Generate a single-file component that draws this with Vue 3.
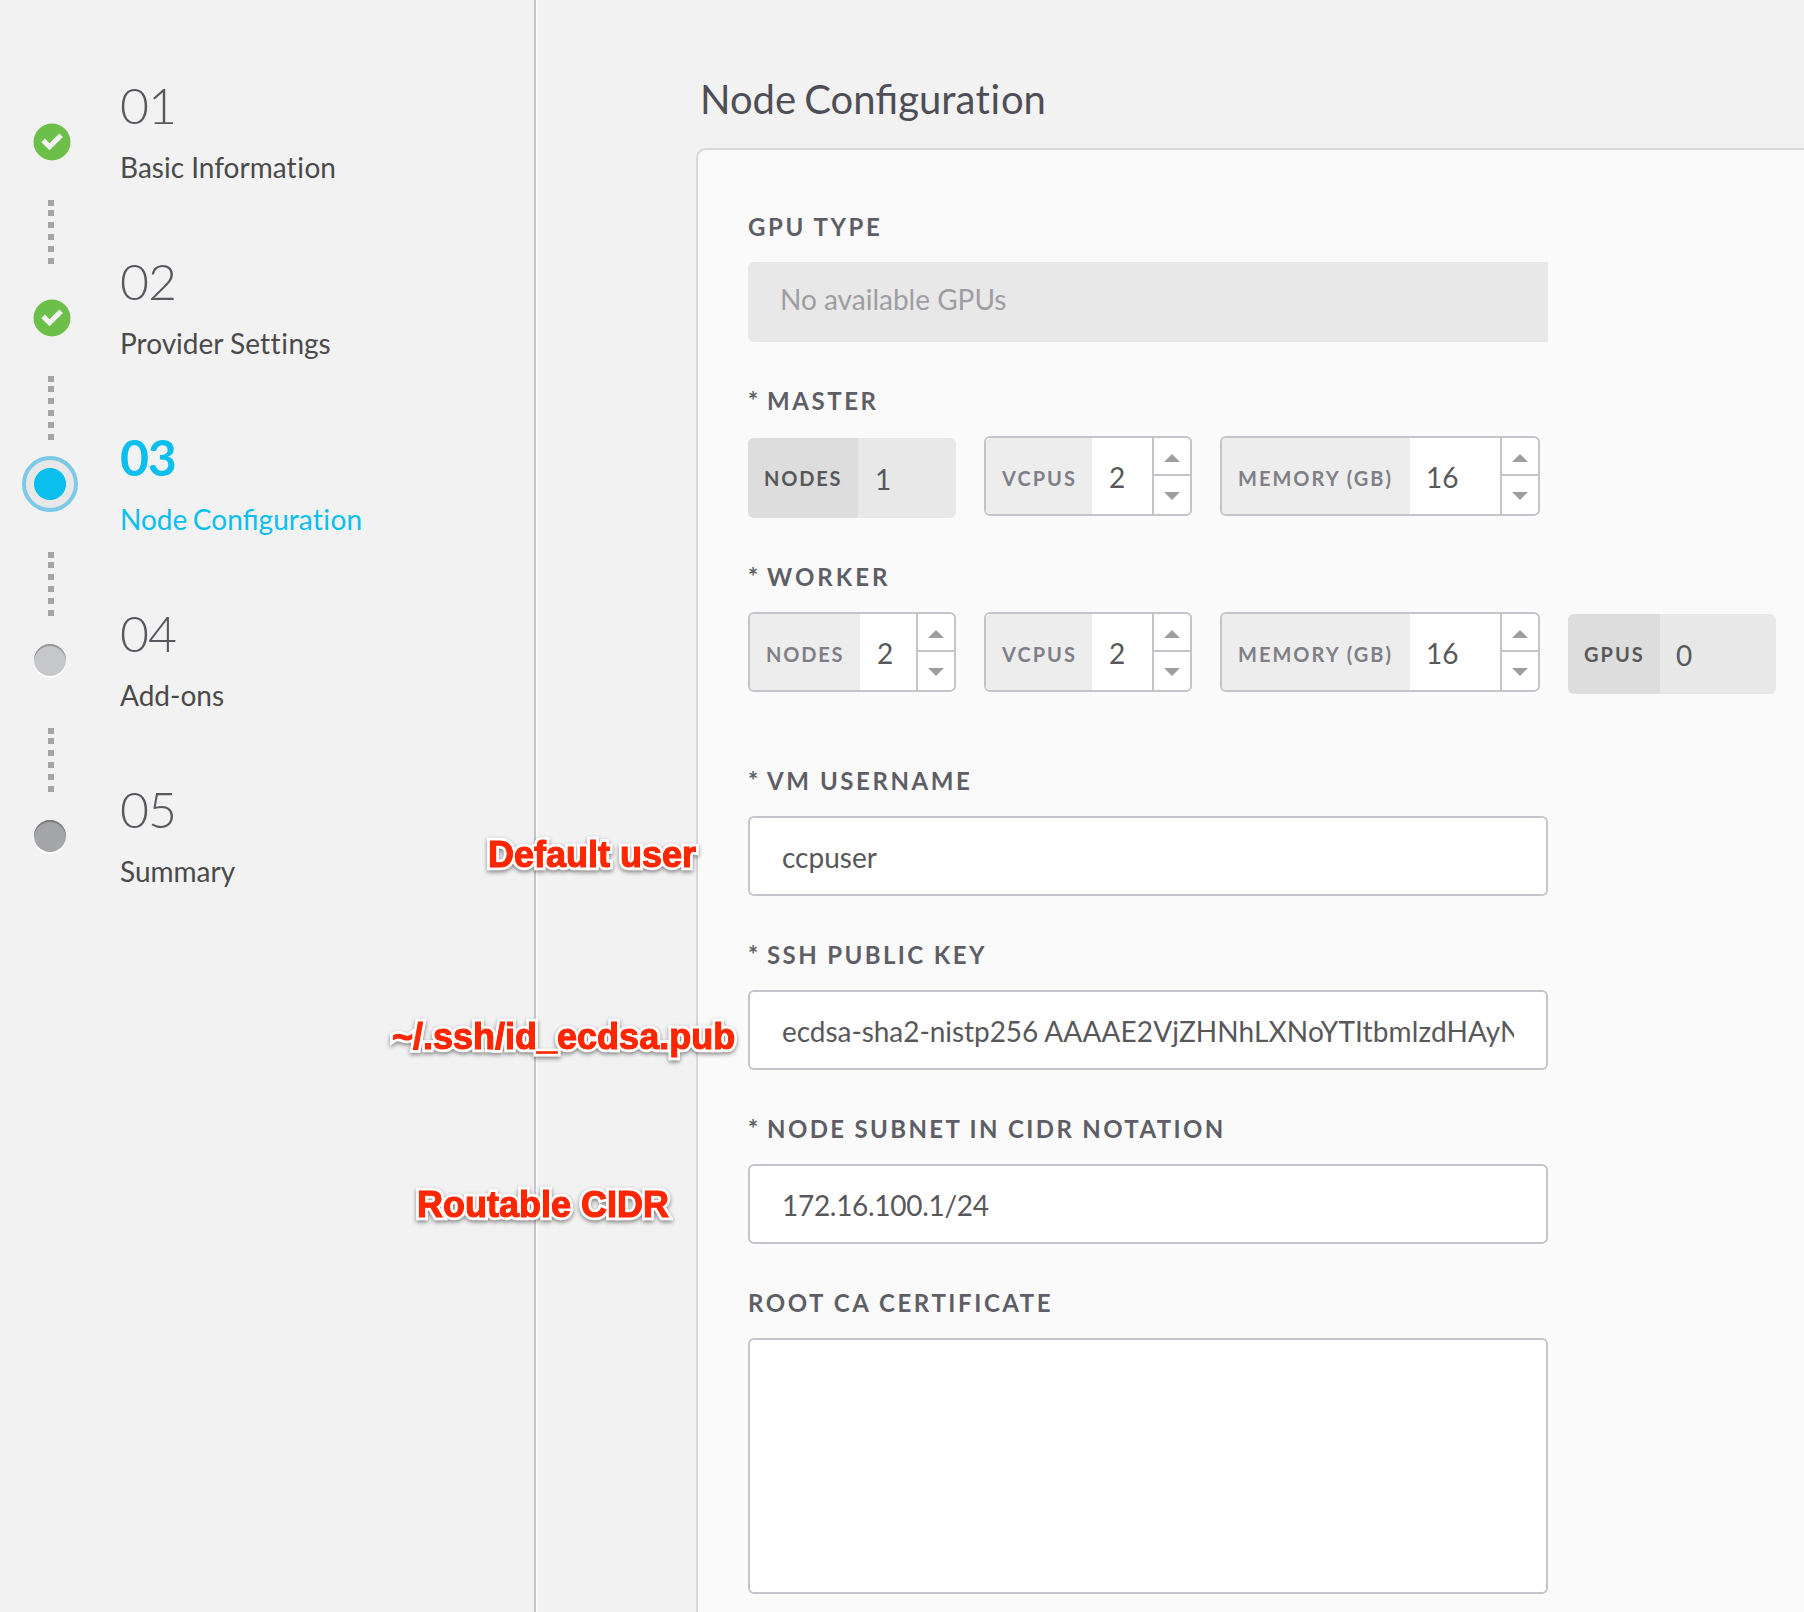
<script setup>
const steps = [
  { number: '01', title: 'Basic Information', state: 'done' },
  { number: '02', title: 'Provider Settings', state: 'done' },
  { number: '03', title: 'Node Configuration', state: 'active' },
  { number: '04', title: 'Add-ons', state: 'next' },
  { number: '05', title: 'Summary', state: 'pending' },
]

const pools = [
  {
    label: 'MASTER',
    key: 'master',
    fields: [
      { name: 'NODES', value: '1', size: 'nodes', disabled: true },
      { name: 'VCPUS', value: '2', size: 'vcpus' },
      { name: 'MEMORY (GB)', value: '16', size: 'memory' },
    ],
  },
  {
    label: 'WORKER',
    key: 'worker',
    fields: [
      { name: 'NODES', value: '2', size: 'nodes' },
      { name: 'VCPUS', value: '2', size: 'vcpus' },
      { name: 'MEMORY (GB)', value: '16', size: 'memory' },
      { name: 'GPUS', value: '0', size: 'gpus', disabled: true },
    ],
  },
]

const inputs = [
  { label: 'VM USERNAME', parts: ['ccpuser'], kind: 'user' },
  { label: 'SSH PUBLIC KEY', parts: ['ecdsa-sha2-nistp256 ', 'AAAAE2VjZHNhLXNoYTItbmlzdHAyN'], kind: 'key' },
  { label: 'NODE SUBNET IN CIDR NOTATION', parts: ['172.16.100.1/24'], kind: 'cidr' },
]

const notes = [
  { text: 'Default user', place: 'note-user' },
  { text: '~/.ssh/id_ecdsa.pub', place: 'note-key' },
  { text: 'Routable CIDR', place: 'note-cidr' },
]

// Lato joins "ti" and "tt"; those pairs are set apart, while "fi" stays joined.
const pieces = (text) => text.split(/(tti|tt|ti)/)
</script>

<template>
  <div class="page">
    <aside class="sidebar">
      <div v-for="(step, i) in steps" :key="step.number" class="step" :class="step.state">
        <div class="rail">
          <div class="marker">
            <svg v-if="step.state === 'done'" class="check" width="38" height="38" viewBox="0 0 38 38">
              <circle cx="19" cy="19" r="18.5" fill="#6cc04a" />
              <path d="M8.3 19.2 L11.9 15.6 L16.5 20.2 L26.3 10.5 L30 14.1 L16.5 27.3 Z" fill="#f2f2f2" />
            </svg>
            <span v-else class="dot"></span>
          </div>
          <div v-if="i < steps.length - 1" class="trail">
            <i v-for="n in 6" :key="n"></i>
          </div>
        </div>
        <div class="caption">
          <div class="number">{{ step.number }}</div>
          <div class="title"><span v-for="(p, k) in pieces(step.title)" :key="k" :class="{ apart: k % 2 }">{{ p }}</span></div>
        </div>
      </div>
    </aside>

    <main class="content">
      <h1><span v-for="(p, k) in pieces('Node Configuration')" :key="k" :class="{ apart: k % 2 }">{{ p }}</span></h1>
      <section class="card">
        <div class="group">
          <div class="label">GPU TYPE</div>
          <div class="select">No available GPUs</div>
        </div>

        <div v-for="pool in pools" :key="pool.key" class="group" :class="pool.key">
          <div class="label"><span class="star">* </span>{{ pool.label }}</div>
          <div class="row">
            <div
              v-for="field in pool.fields"
              :key="field.name"
              class="spinner"
              :class="[field.size, { disabled: field.disabled }]"
            >
              <span class="addon">{{ field.name }}</span>
              <span class="value">{{ field.value }}</span>
              <span v-if="!field.disabled" class="arrows">
                <span class="arrow"><i class="up"></i></span>
                <span class="arrow"><i class="down"></i></span>
              </span>
            </div>
          </div>
        </div>

        <div v-for="input in inputs" :key="input.label" class="group" :class="input.kind">
          <div class="label"><span class="star">* </span>{{ input.label }}</div>
          <div class="input"><div class="text"><span v-for="part in input.parts" :key="part">{{ part }}</span></div></div>
        </div>

        <div class="group">
          <div class="label">ROOT CA CERTIFICATE</div>
          <div class="textarea"></div>
        </div>
      </section>
    </main>

    <div v-for="note in notes" :key="note.place" class="note" :class="note.place" :data-text="note.text">{{ note.text }}</div>
  </div>
</template>

<style>
body {
  margin: 0;
  overflow: hidden;
}
</style>

<style scoped>
.page {
  position: relative;
  display: flex;
  width: 1804px;
  height: 1612px;
  overflow: hidden;
  background: #f2f2f2;
  font-family: Lato, "Liberation Sans", sans-serif;
  color: #58585b;
}
.apart {
  font-variant-ligatures: none;
  letter-spacing: 0.02em;
}
.sidebar {
  box-sizing: border-box;
  flex: none;
  width: 538px;
  padding-top: 76px;
  border-right: 2px solid #fafafa;
  box-shadow: inset -2px 0 0 #c4c4ca;
}
.step {
  display: flex;
  height: 176px;
}
.rail {
  display: flex;
  flex-direction: column;
  width: 120px;
}
.marker {
  box-sizing: border-box;
  height: 124px;
  padding: 47px 0 0 33px;
}
.check {
  display: block;
}
.dot {
  box-sizing: border-box;
  display: block;
  width: 32px;
  height: 32px;
  margin: -7px 0 0 1px;
  border-radius: 50%;
}
.next .dot {
  background: #c6c7ca;
  box-shadow: inset 0 2px 0 #98989a, 0 2px 0 #fff;
}
.pending .dot {
  background: #a4a5a9;
  box-shadow: inset 0 2px 0 #7d7d80, 0 2px 0 #fff;
}
.active .dot {
  width: 56px;
  height: 56px;
  margin: -19px 0 0 -11px;
  border: 4px solid #7ccae8;
  background: radial-gradient(circle, #0abfee 15.6px, #e8e8e8 16.4px);
}
.trail {
  display: flex;
  flex: none;
  flex-direction: column;
  gap: 6px;
  height: 64px;
  margin-bottom: -12px;
  padding-left: 48px;
}
.trail i {
  flex: none;
  width: 6px;
  height: 6px;
  background: #a4a5a9;
}
.trail i:first-child {
  margin-bottom: -2px;
}
.number {
  height: 74px;
  line-height: 58px;
  font-size: 50px;
  font-weight: 300;
  letter-spacing: -0.9px;
  color: #58585f;
}
.title {
  line-height: 34px;
  font-size: 28px;
  color: #4a4a4b;
}
.active .number {
  font-weight: 700;
  letter-spacing: -1.2px;
  color: #0abfee;
}
.active .title {
  word-spacing: -1.6px;
  color: #0abfee;
}
.content {
  flex: none;
  width: 1400px;
  padding: 73px 0 0 158px;
}
h1 {
  margin: 0 0 23px 4px;
  height: 52px;
  line-height: 52px;
  font-size: 40px;
  font-weight: 400;
  word-spacing: -2.1px;
  color: #4e4e57;
}
.card {
  box-sizing: border-box;
  height: 1600px;
  padding: 62px 50px;
  border: 2px solid #d8d8da;
  border-radius: 10px;
  background: #fafafa;
}
.group {
  margin-bottom: 44px;
}
.group.worker {
  margin-bottom: 72px;
}
.label {
  height: 30px;
  margin-bottom: 20px;
  line-height: 30px;
  font-size: 24px;
  font-weight: 700;
  letter-spacing: 2.57px;
  white-space: nowrap;
  color: #5e5e66;
}
.star {
  letter-spacing: 1.5px;
}
.worker .label {
  letter-spacing: 3px;
}
.key .label {
  letter-spacing: 2.4px;
}
.cidr .label {
  letter-spacing: 2.35px;
}
.label .star {
  letter-spacing: 1.5px;
}
.select {
  box-sizing: border-box;
  width: 800px;
  height: 80px;
  padding-left: 32px;
  border-radius: 6px 0 0 6px;
  line-height: 74px;
  font-size: 28px;
  color: #9e9ea2;
  background: #e8e8e8;
}
.row {
  display: flex;
  align-items: flex-start;
  gap: 28px;
  height: 82px;
}
.spinner {
  box-sizing: border-box;
  display: flex;
  width: 208px;
  height: 80px;
  overflow: hidden;
  border: 2px solid #c4c4ca;
  border-radius: 6px;
  background: #fff;
}
.spinner.memory {
  width: 320px;
}
.addon {
  box-sizing: border-box;
  flex: none;
  width: 110px;
  padding-left: 16px;
  line-height: 80px;
  font-size: 20px;
  font-weight: 700;
  letter-spacing: 2px;
  white-space: nowrap;
  color: #7f7f87;
  background: #ededed;
}
.nodes .addon {
  letter-spacing: 1.8px;
}
.vcpus .addon {
  width: 106px;
}
.memory .addon {
  width: 188px;
}
.gpus .addon {
  width: 92px;
}
.value {
  flex: 1;
  padding-left: 16px;
  line-height: 79px;
  font-size: 28px;
}
.vcpus .value,
.nodes .value {
  padding-left: 17px;
}
.arrows {
  display: flex;
  flex-direction: column;
  width: 36px;
  border-left: 2px solid #c4c4ca;
}
.arrow {
  display: flex;
  justify-content: center;
  height: 36px;
}
.arrow + .arrow {
  height: 38px;
  border-top: 2px solid #c4c4ca;
}
.arrow i {
  width: 0;
  height: 0;
  margin-top: 16px;
  border-left: 8px solid transparent;
  border-right: 8px solid transparent;
}
.up {
  border-bottom: 8px solid #9e9ea2;
}
.down {
  border-top: 8px solid #9e9ea2;
}
.spinner.disabled {
  margin-top: 2px;
  border: 0;
  background: #e8e8e8;
}
.disabled .addon {
  color: #58585b;
  background: #dddddd;
}
.disabled .value {
  line-height: 83px;
}
.input {
  box-sizing: border-box;
  width: 800px;
  height: 80px;
  padding: 0 32px;
  border: 2px solid #c4c4ca;
  border-radius: 6px;
  line-height: 79px;
  font-size: 28px;
  background: #fff;
}
.text {
  height: 76px;
  overflow: hidden;
  white-space: pre;
}
.key .text {
  letter-spacing: 0.11px;
  word-spacing: -1px;
}
.key .text span:first-child {
  letter-spacing: -0.06px;
}
.cidr .text {
  letter-spacing: -0.3px;
}
.textarea {
  box-sizing: border-box;
  width: 800px;
  height: 256px;
  border: 2px solid #c4c4ca;
  border-radius: 6px;
  background: #fff;
}
.note {
  position: absolute;
  line-height: 40px;
  font-family: "Liberation Sans", Arial, sans-serif;
  font-size: 36px;
  font-weight: 700;
  white-space: nowrap;
  color: #ff2600;
  -webkit-text-stroke: 1.1px #ff2600;
  filter: drop-shadow(0 2px 2px rgba(0, 0, 0, 0.45));
}
.note::before {
  content: attr(data-text);
  position: absolute;
  left: 0;
  top: 0;
  z-index: -1;
  color: #fff;
  -webkit-text-stroke: 6.5px #fff;
  stroke-linejoin: round;
}
.note-user {
  left: 488px;
  top: 835px;
}
.note-key {
  left: 392px;
  top: 1017px;
}
.note-cidr {
  left: 417px;
  top: 1185px;
}
</style>
